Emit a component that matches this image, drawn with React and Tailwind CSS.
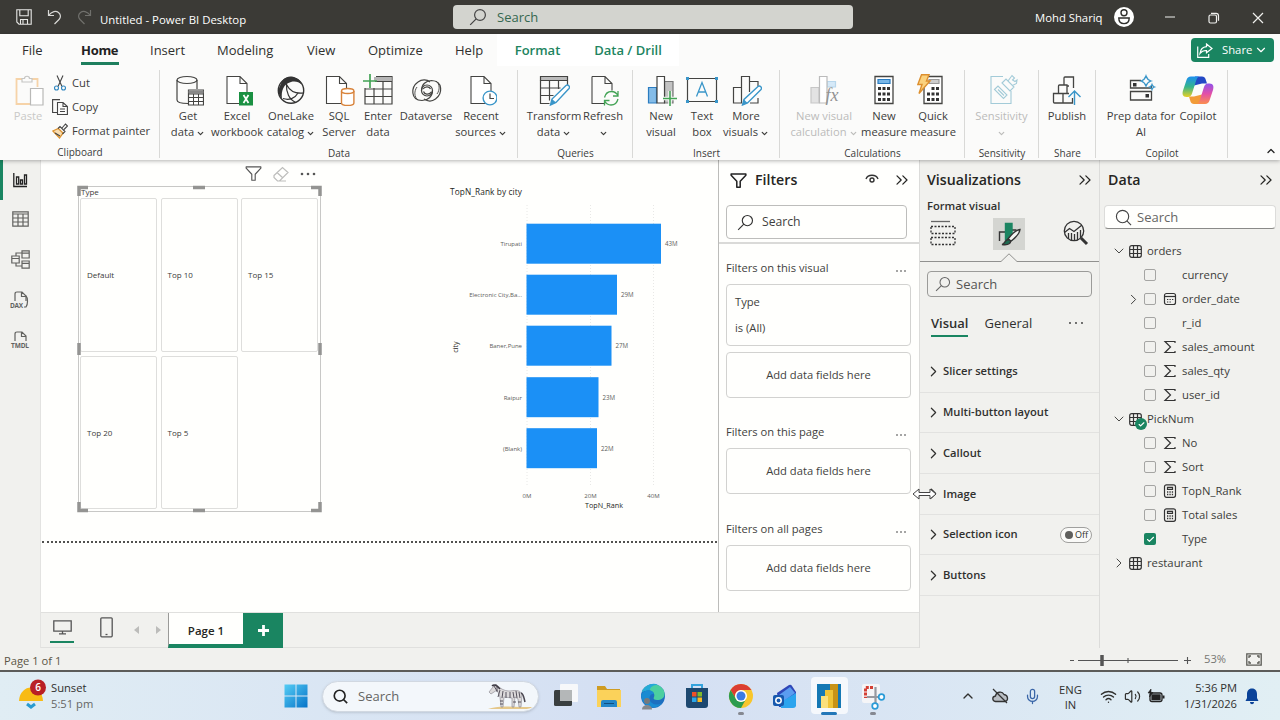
import {
  Check,
  ChevronDown,
  ChevronRight,
  ChevronUp,
  ChevronsRight,
  Mic,
  Wifi,
  Volume2,
} from "lucide-react";

const INK = "#444442";
const BLUE = "#3a96c9";

/* ---------- small shared glyphs ---------- */

function Magnifier({ size = 18, color = "#333", flip = false, width = 1.2 }) {
  return (
    <svg width={size} height={size} viewBox="0 0 18 18" fill="none" stroke={color} strokeWidth={width}>
      {flip ? (
        <>
          <circle cx="8" cy="8" r="6.5" />
          <path d="M12.6 12.6L17 17" />
        </>
      ) : (
        <>
          <circle cx="11" cy="7" r="5.4" />
          <path d="M7.2 10.8L1.2 16.8" />
        </>
      )}
    </svg>
  );
}

function Funnel({ size = 18, color = "#222", width = 1.4 }) {
  return (
    <svg width={size} height={size} viewBox="0 0 18 18" fill="none" stroke={color} strokeWidth={width} strokeLinejoin="round">
      <path d="M1.2 2h15.6v1.4l-6 6.4v6.4H7.2V9.8l-6-6.4z" />
    </svg>
  );
}

function Dots({ gap = 4, r = 0.8, color = "#333", className = "" }) {
  return (
    <svg width={gap * 2 + 4} height="4" viewBox={`0 0 ${gap * 2 + 4} 4`} fill={color} className={className}>
      <circle cx="2" cy="2" r={r} />
      <circle cx={2 + gap} cy="2" r={r} />
      <circle cx={2 + gap * 2} cy="2" r={r} />
    </svg>
  );
}

function Icon({ children }) {
  return (
    <svg width="32" height="32" viewBox="0 0 32 32" fill="none" stroke={INK} strokeWidth="1.2" className="shrink-0">
      {children}
    </svg>
  );
}

const PageShape = () => (
  <path d="M6 2.5h13l7 7v20H6zM19 2.5v7h7" fill="#fff" strokeWidth="1.1" />
);

/* ---------- ribbon icons ---------- */

const icons = {
  paste: (
    <Icon>
      <path d="M10 5H4.5v25H18M20 5h5.5v8" stroke="#f6d3a8" strokeWidth="1.8" />
      <path d="M10 8V4.5h2.5c0-3 5-3 5 0H20V8z" stroke="#c6c6c4" />
      <path d="M18.500 14.500h12.500v16.500h-12.500z" stroke="#b9b9b7" fill="#fff" />
    </Icon>
  ),
  getData: (
    <Icon>
      <ellipse cx="15" cy="6" rx="10" ry="3.5" />
      <path d="M5 6v20c0 2 4 3.500 11 3.500M25 6v9" />
      <path d="M16.500 16h15v15h-15z" fill="#fff" />
      <path d="M16.500 16.500h15v3h-15z" fill="#888" stroke="none" />
      <path d="M16.500 20h15M16.500 23.500h15M16.500 27.500h15M21.500 20v11M26.500 20v11" strokeWidth="1" />
    </Icon>
  ),
  excel: (
    <Icon>
      <PageShape />
      <path d="M18 18h14v13.500H18z" fill="#1a9042" stroke="none" />
      <path d="M22.500 21l5 8M27.500 21l-5 8" stroke="#fff" strokeWidth="1.700" />
    </Icon>
  ),
  oneLake: (
    <Icon>
      <circle cx="16" cy="16.500" r="12.700" stroke="#333" strokeWidth="1.400" />
      <path d="M21 4C13 0 7 5 6 10c-3.500 5-3 11 1 14.500C6 17 8.500 10 16 8c4-1.200 8 0 10.500 2.500C25.500 7 24 5 21 4z" fill="#333" stroke="none" />
      <path d="M11.500 10c-.5 8 2.500 16 9.500 18.500M11.500 10.500c3.500 7 9 9.500 17 8.500M8 24.500c6 2 12 0 15-5.500" stroke="#333" />
    </Icon>
  ),
  sql: (
    <Icon>
      <path d="M3.500 2.500h13l7 7v20h-20zM16.500 2.500v7h7" fill="#fff" strokeWidth="1.1" />
      <path d="M18.500 17v12c0 1.500 3 2.500 6.200 2.500s6.200-1 6.200-2.500V17" fill="#fff" stroke="#d8833b" strokeWidth="1.400" />
      <ellipse cx="24.700" cy="17" rx="6.200" ry="2.500" fill="#fff" stroke="#d8833b" strokeWidth="1.400" />
    </Icon>
  ),
  enter: (
    <Icon>
      <path d="M14 2.500h16v27.500h-27V14" />
      <path d="M12 3h17.500v4H12z" fill="#b5b5b5" stroke="none" />
      <path d="M13 7.500h17M3 15h27M3 22.500h27M12 14v16M21 7.500V30" />
      <path d="M8 0v14M1 7h14" stroke="#43a355" strokeWidth="1.700" />
    </Icon>
  ),
  dataverse: (
    <Icon>
      <g strokeWidth="1.200">
        <circle cx="17" cy="16.500" r="5.500" />
        <path d="M22.500 16.500c0 6-4.500 10-10.500 10C0 26 1 13 8 8c4-3 9-2.500 12 0" />
        <path d="M11.500 16.500c0-6 4.500-10 10-10 12 .5 11 13.500 4 18.500-4 3-8.500 2-11.500 0" />
        <path d="M8 26c-4-3-4-9-1-13M26 7c4 3 4 9 1 13" strokeWidth=".9" />
        <path d="M13.500 17.500c1 3 5 4 8 .5M20.500 15c-1.500-3-5.500-2.500-7.500 0" />
      </g>
    </Icon>
  ),
  recent: (
    <Icon>
      <PageShape />
      <circle cx="25" cy="24" r="6.900" fill="#fff" stroke={BLUE} strokeWidth="1.400" />
      <path d="M25 19.500v5h4" />
    </Icon>
  ),
  transform: (
    <Icon>
      <path d="M2.500 2.500h27v4h-27z" fill="#bbb" />
      <path d="M29.500 6.500v5M2.500 6.500v23h9M2.500 14h20M2.500 21.500h13M11.500 6.500v20M20.500 6.500V15" />
      <path d="M12.500 31l1.500-6L28 11.500c2-1.500 4.500 1 3 3L18 28.500z" fill="#fff" stroke={BLUE} strokeWidth="1.400" />
      <path d="M12.500 31l1.500-6 4 3.500z" fill={BLUE} stroke="none" />
    </Icon>
  ),
  refresh: (
    <Icon>
      <path d="M5 2.500h13l7 7v7M5 2.500v27h12M18 2.500v7h7" strokeWidth="1.1" />
      <path d="M17.500 23.500c1-4 3-6 7-6 3 0 5 1.500 6.500 4M31 17v5h-5M31 25c-1 4-3.500 6-7 6-3 0-5-1.500-6.500-4M17.500 31.500v-5h5" stroke="#43a355" strokeWidth="1.300" />
    </Icon>
  ),
  newVisual: (
    <Icon>
      <path d="M3.500 13.500h8V29h-8z" fill="#84bce8" stroke="#2b7cc0" />
      <path d="M19.500 7.500H28V29h-8.500z" fill="#c3c3c3" stroke="#777" />
      <path d="M12 2.500h7.500V29H12z" fill="#fff" />
      <path d="M25 17v15M18 24.500h14" stroke="#fbfbfa" strokeWidth="3.500" />
      <path d="M25 17v15M18 24.500h14" stroke="#43a355" strokeWidth="1.600" />
    </Icon>
  ),
  textBox: (
    <Icon>
      <path d="M1.500 4.500h29v23h-29z" />
      <path d="M10.500 22.500l5.500-14 5.500 14M12.500 18h7" stroke={BLUE} strokeWidth="1.300" />
      <path d="M0 3h3v3H0zM29 3h3v3h-3zM0 26h3v3H0zM29 26h3v3h-3z" fill={BLUE} stroke="none" />
    </Icon>
  ),
  moreVisuals: (
    <Icon>
      <path d="M3.500 13.500h8V29h-8zM11.500 29V2.500h8V18M19.500 7.500H28v5M28 24v5h-8" />
      <path d="M12.500 31l1.500-5.500L28 12.500c2-1.500 4.500 1 3 3L17.500 29z" fill="#fff" stroke={BLUE} strokeWidth="1.400" />
      <path d="M12.500 31l1.500-5.500 3.500 3.500z" fill={BLUE} stroke="none" />
    </Icon>
  ),
  calcVisual: (
    <Icon>
      <path d="M3 13.500h8V29H3z" fill="#e3e3e3" stroke="#c7c7c7" />
      <path d="M19 7.500h8.500V13H19z" fill="#d5e9f8" stroke="#b8d7ec" />
      <path d="M11.500 2.500H19V29h-7.500z" fill="#fff" stroke="#bbb" />
      <text x="17.500" y="27" fontSize="18" fontStyle="italic" fontFamily="Liberation Serif, serif" fill="#929292" stroke="none">
        fx
      </text>
    </Icon>
  ),
  measure: (
    <Icon>
      <path d="M7 2.500h18v27H7z" fill="#fff" strokeWidth="1.300" />
      <path d="M10 5.500h12v4H10z" fill="#79b7e8" stroke="#2b7cc0" />
      <path
        d="M10 13h3v3h-3zM14.500 13h3v3h-3zM19 13h3v3h-3zM10 18.500h3v3h-3zM14.500 18.500h3v3h-3zM19 18.500h3v3h-3zM10 24h3v3h-3zM14.500 24h3v3h-3zM19 24h3v3h-3z"
        fill="#333"
        stroke="none"
      />
    </Icon>
  ),
  quick: (
    <Icon>
      <path d="M7 2.500h18v27H7z" fill="#fff" strokeWidth="1.300" />
      <path d="M12 5.500h10v4H12z" fill="#ccc" stroke="#999" />
      <path
        d="M14.500 13h3v3h-3zM19 13h3v3h-3zM10 18.500h3v3h-3zM14.500 18.500h3v3h-3zM19 18.500h3v3h-3zM10 24h3v3h-3zM14.500 24h3v3h-3zM19 24h3v3h-3z"
        fill="#333"
        stroke="none"
      />
      <path d="M4.500.7H12L9.500 7H13L2 19.500l3-9H.8z" fill="#fbd27e" stroke="#dd8f2e" strokeWidth="1.400" />
    </Icon>
  ),
  sensitivity: (
    <Icon>
      <g stroke="#a3cbd8" strokeWidth="1.100">
        <path d="M17 2.500H5V29.500h20V17" />
        <path d="M8.500 15.500l3.500-3.500 9 9-3.500 3.500zM12 15.500l6 6" />
        <path d="M16 9l4-4 8 8-4 4zM22 7l4-5.500 2.500 2.500-2 2 2.500 1.500 2-1.500-.5 3.500-4 2" />
      </g>
    </Icon>
  ),
  publish: (
    <Icon>
      <path d="M2.500 19.500h9.500v9.500H3.500q-1 0-1-1zM7.500 19.500V12q0-1 1-1h7.500v8.500M12 29h9.500V24M13 11V4q0-1 1-1h8.500v11M12 19.500h6M16 12h2" strokeWidth="1.300" />
      <path d="M23.500 31V17.500M17.500 23l6-6 6 6" stroke={BLUE} strokeWidth="1.400" />
    </Icon>
  ),
  prep: (
    <Icon>
      <path d="M16 6.500H5.500v7.500h21v-2M5.500 17.500h21V26h-21z" strokeWidth="1.300" />
      <path d="M8 9h3.500v3.500H8zM20.500 20H24v3.500h-3.500z" fill="#333" stroke="none" />
      <path d="M21 2c1 3 2 4 5 5-3 1-4 2-5 5-1-3-2-4-5-5 3-1 4-2 5-5z" stroke={BLUE} strokeWidth="1.300" />
      <path d="M27 10.500c.5 1.500 1 2 2.500 2.500-1.500.5-2 1-2.500 2.500-.5-1.500-1-2-2.500-2.500 1.500-.5 2-1 2.500-2.500z" stroke={BLUE} />
    </Icon>
  ),
  copilot: (
    <Icon>
      <defs>
        <linearGradient id="cpLeft" x1="0" y1="0" x2="0" y2="1">
          <stop offset="0" stopColor="#1c8ff0" />
          <stop offset="0.5" stopColor="#35b58b" />
          <stop offset="1" stopColor="#e8d024" />
        </linearGradient>
        <linearGradient id="cpRight" x1="0" y1="0" x2="0" y2="1">
          <stop offset="0" stopColor="#8f52ea" />
          <stop offset="0.5" stopColor="#e34fa8" />
          <stop offset="1" stopColor="#fb8e4e" />
        </linearGradient>
      </defs>
      <g stroke="none">
        <path d="M13 2.500h7c2 0 3 1 3.500 2.500L25 9.500h-5l-8 2z" fill="#2348c5" />
        <path d="M19 30h-7c-2 0-3-1-3.500-2.500L7 22.500h5l8-2z" fill="#f29b38" />
        <path d="M9 2.500h8c-2 1-2.500 3-3.500 6l-3.500 11c-.7 2-2 3.500-4 3.500H4.500c-4 0-4.500-3-3.500-6.500L4.500 6C5.200 4 6.500 2.500 9 2.500z" fill="url(#cpLeft)" />
        <path d="M23 30h-8c2-1 2.500-3 3.500-6L22 13c.7-2 2-3.500 4-3.500h1.500c4 0 4.500 3 3.500 6.500l-3.500 10.500c-.7 2-2 3.500-4.500 3.500z" fill="url(#cpRight)" />
      </g>
    </Icon>
  ),
};

const groups = [
  {
    name: "Data",
    box: "w-[358px]",
    pad: "pl-1",
    items: [
      { icon: "getData", a: "Get", b: "data", caret: true, w: "w-12" },
      { icon: "excel", a: "Excel", b: "workbook", w: "w-[50px]" },
      { icon: "oneLake", a: "OneLake", b: "catalog", caret: true, w: "w-[58px]" },
      { icon: "sql", a: "SQL", b: "Server", w: "w-[38px]" },
      { icon: "enter", a: "Enter", b: "data", w: "w-10" },
      { icon: "dataverse", a: "Dataverse", w: "w-14" },
      { icon: "recent", a: "Recent", b: "sources", caret: true, w: "w-[54px]" },
    ],
  },
  {
    name: "Queries",
    box: "w-[115px]",
    pad: "pl-[10px]",
    items: [
      { icon: "transform", a: "Transform", b: "data", caret: true, w: "w-[52px]" },
      { icon: "refresh", a: "Refresh", b: "", caret: true, w: "w-[46px]" },
    ],
  },
  {
    name: "Insert",
    box: "w-[147px]",
    pad: "pl-2",
    items: [
      { icon: "newVisual", a: "New", b: "visual", w: "w-10" },
      { icon: "textBox", a: "Text", b: "box", w: "w-[42px]" },
      { icon: "moreVisuals", a: "More", b: "visuals", caret: true, w: "w-[46px]" },
    ],
  },
  {
    name: "Calculations",
    box: "w-[185px]",
    pad: "pl-2",
    items: [
      { icon: "calcVisual", a: "New visual", b: "calculation", caret: true, dim: true, w: "w-[72px]" },
      { icon: "measure", a: "New", b: "measure", w: "w-12" },
      { icon: "quick", a: "Quick", b: "measure", w: "w-[50px]" },
    ],
  },
  {
    name: "Sensitivity",
    box: "w-[74px]",
    pad: "",
    items: [{ icon: "sensitivity", a: "Sensitivity", b: "", caret: true, dim: true, w: "w-[73px]" }],
  },
  {
    name: "Share",
    box: "w-[57px]",
    pad: "",
    items: [{ icon: "publish", a: "Publish", w: "w-14" }],
  },
  {
    name: "Copilot",
    box: "w-[132px]",
    pad: "pl-[10px]",
    items: [
      { icon: "prep", a: "Prep data for", b: "AI", w: "w-[70px]" },
      { icon: "copilot", a: "Copilot", w: "w-11" },
    ],
  },
];

function RibbonButton({ item }) {
  return (
    <div className={`flex shrink-0 flex-col items-center ${item.w} ${item.dim ? "text-[#bcbcba]" : "text-[#3c3c3a]"}`}>
      {icons[item.icon]}
      <span className="mt-[2px] whitespace-nowrap leading-4">{item.a}</span>
      <span className="flex h-4 items-center gap-[2px] whitespace-nowrap leading-4">
        {item.b}
        {item.caret ? <ChevronDown size={9} strokeWidth={3.2} className="mt-[2px]" /> : null}
      </span>
    </div>
  );
}

function TitleBar() {
  return (
    <header className="flex h-[34px] items-center bg-[#3b3a36] text-white">
      <div className="flex w-[446px] items-center pl-4">
        <svg width="16" height="16" viewBox="0 0 16 16" fill="none" stroke="#e8e8e6" strokeWidth="1.1">
          <path d="M.8.8h14.400v14.400H3L.8 13zM3.800.8v6h8.400v-6M4.500 15v-4.500h7V15M7 11v4" />
        </svg>
        <svg width="15" height="16" viewBox="0 0 15 16" fill="none" stroke="#d8d8d6" strokeWidth="1.200" className="ml-[15px]">
          <path d="M1.500 1v5.500H7M1.500 6.500C5 2 9 1.500 11.500 3.500c2.500 2 2.500 5 .5 7L7.500 15" />
        </svg>
        <svg width="15" height="16" viewBox="0 0 15 16" fill="none" stroke="#70706c" strokeWidth="1.200" className="ml-[15px]">
          <path d="M13.500 1v5.500H8M13.500 6.500C10 2 6 1.500 3.500 3.500 1 5.500 1 8.500 3 10.500L7.500 15" />
        </svg>
        <span className="ml-[8px] mt-[5px] whitespace-nowrap text-[11.400px]">Untitled - Power BI Desktop</span>
      </div>
      <div className="ml-[7px] flex h-6 w-[400px] items-center rounded-sm bg-[#d3d4cf] pl-4 text-[#35684f]">
        <Magnifier color="#444" size={18} />
        <span className="ml-[10px] mt-[2px] text-[13px]">Search</span>
      </div>
      <span className="ml-[182px] mt-[2px] whitespace-nowrap text-[11.300px]">Mohd Shariq</span>
      <svg width="20" height="20" viewBox="0 0 20 20" fill="none" stroke="#2f2f2c" strokeWidth="1.400" className="ml-[11px]">
        <circle cx="10" cy="10" r="10" fill="#fff" stroke="none" />
        <circle cx="10" cy="5.800" r="3" />
        <path d="M4.800 11h10.400c0 3.600-2.200 5.600-5.200 5.600S4.800 14.600 4.800 11z" />
      </svg>
      <svg width="100" height="14" viewBox="0 0 100 14" fill="none" stroke="#f0f0ee" strokeWidth="1.200" className="ml-[31px] mt-[2px]">
        <path d="M0 6h10M88 2l10 10M98 2L88 12" />
        <rect x="44" y="4" width="7.500" height="8" rx="1.500" />
        <path d="M46 2.300h5c1.500 0 2.500 1 2.500 2.500v5" />
      </svg>
    </header>
  );
}

function Menu() {
  return (
    <nav className="flex h-8 items-stretch text-[13px] text-[#30302e]">
      <div className="flex w-[497px] items-center pt-[2px]">
        <span className="w-[81px] pl-[22px]">File</span>
        <span className="relative w-[69px] font-bold tracking-[-0.3px] text-[#222]">
          Home
          <i className="absolute -bottom-[4px] left-0 h-[3px] w-[38px] bg-[#1e7f5e]" />
        </span>
        <span className="w-[67px]">Insert</span>
        <span className="w-[90px]">Modeling</span>
        <span className="w-[61px]">View</span>
        <span className="w-[87px]">Optimize</span>
        <span>Help</span>
      </div>
      <span className="flex w-[80px] items-center justify-center bg-white pt-[2px] pl-px font-semibold text-[#218460]">Format</span>
      <span className="flex w-[102px] items-center justify-center bg-white pt-[2px] font-semibold text-[#218460]">Data / Drill</span>
      <button className="mt-1 ml-auto mr-[6px] flex h-6 w-[83px] items-center rounded bg-[#1a8561] pl-[6px] text-white">
        <svg width="16" height="15" viewBox="0 0 16 15" fill="none" stroke="#fff" strokeWidth="1.200">
          <path d="M.7 3.500v10.800h11V11M9.500 1l5.500 4.500-5.500 4.200V7.500C6.500 7.300 4.500 8.500 3 10.500c.5-4 3-6.500 6.500-6.800z" />
        </svg>
        <span className="ml-[9px] mt-px text-[11.300px]">Share</span>
        <ChevronDown size={14} className="ml-[2px]" />
      </button>
    </nav>
  );
}

function Clipboard() {
  return (
    <div className="flex h-[94px] w-[160px] flex-col">
      <div className="flex h-[79px]">
        <div className="ml-[13px] flex w-[30px] flex-col items-center pt-2 text-[#c9c9c7]">
          {icons.paste}
          <span className="mt-[2px] leading-4">Paste</span>
        </div>
        <div className="ml-[9px] flex flex-col pt-[5px] text-[#3c3c3a]">
          <div className="flex h-6 items-center gap-[4px]">
            <svg width="16" height="16" viewBox="0 0 16 16" fill="none" stroke="#444" strokeWidth="1.100">
              <path d="M5 .5l5 11M11 .5l-5 11" />
              <circle cx="4.500" cy="13" r="2" stroke="#2f86c0" />
              <circle cx="11.500" cy="13" r="2" stroke="#2f86c0" />
            </svg>
            Cut
          </div>
          <div className="flex h-6 items-center gap-[4px]">
            <svg width="16" height="16" viewBox="0 0 16 16" fill="none" stroke="#444" strokeWidth="1.100">
              <path d="M5 13.500H.6V.6H8M5.500 3.500h5.500l4.400 4v8h-9.900zM11 3.500v4h4.400M8 10h5M8 12.500h5" />
            </svg>
            Copy
          </div>
          <div className="flex h-6 items-center gap-[4px] whitespace-nowrap">
            <svg width="16" height="16" viewBox="0 0 16 16" fill="none" stroke="#444" strokeWidth="1.100">
              <path d="M.8 8l5.500-2.500L11 10l-3.500 5z" fill="#f8dcb0" stroke="#dc922f" strokeWidth="1.300" />
              <path d="M3 10l5 3M6 5.500l2-2 5 5-2.500 2.500M10 5L13.500 1l2 2L12 6.500" />
            </svg>
            Format painter
          </div>
        </div>
      </div>
      <span className="text-center text-[10px] leading-4">Clipboard</span>
    </div>
  );
}

function Divider() {
  return <i className="-ml-px mt-1 h-[88px] w-px shrink-0 bg-[#d9d9d7]" />;
}

function Ribbon() {
  return (
    <section className="relative z-10 h-[126px] bg-[#fbfbfa] shadow-[0_1px_4px_rgba(0,0,0,0.3)]">
      <Menu />
      <div className="flex text-[11.200px] text-[#3c3c3a]">
        <Clipboard />
        <Divider />
        {groups.map((group) => (
          <div key={group.name} className={`flex shrink-0 ${group.box}`}>
            <div className="flex w-full shrink-0 flex-col">
              <div className={`flex h-[79px] shrink-0 pt-2 ${group.pad}`}>
                {group.items.map((item, i) => (
                  <RibbonButton key={i} item={item} />
                ))}
              </div>
              <span className="text-center text-[10px] leading-4">{group.name}</span>
            </div>
            <Divider />
          </div>
        ))}
        <ChevronUp size={12} strokeWidth={2.6} className="mt-[79px] ml-auto mr-[3px] text-[#222]" />
      </div>
    </section>
  );
}

/* ---------- left rail ---------- */

function ViewRail() {
  return (
    <aside className="flex w-[41px] flex-col border-r border-[#e3e3e1] bg-[#f1f1ee] text-[#62625f]">
      <div className="flex h-10 items-center border-l-[3px] border-[#1a8561] pl-[10px]">
        <svg width="15" height="16" viewBox="0 0 15 16" fill="none" stroke="#222" strokeWidth="1.300">
          <path d="M.8 1v13.500H14M3.500 5h2.200v7H3.500zM7.500 8h2v4h-2zM11.500 3h2v9h-2z" />
        </svg>
      </div>
      <div className="flex h-10 items-center pb-[2px] pl-3">
        <svg width="17" height="16" viewBox="0 0 17 16" fill="none" stroke="#62625f" strokeWidth="1.200">
          <path d="M.8.8h15.400v14.400H.8zM.8 3h15.400M.8 7h15.400M.8 11h15.400M6 3v12M11 3v12" />
        </svg>
      </div>
      <div className="flex h-10 items-center pb-[2px] pl-[11px]">
        <svg width="19" height="19" viewBox="0 0 19 19" fill="none" stroke="#62625f" strokeWidth="1.200">
          <path d="M.8 6h7.400v7H.8zM.8 8.500h7.400M11 .8h7.200V8H11zM11 3.200h7.200M11 11h7.200v7.200H11zM11 13.400h7.200M5 6V3h6M5 13v3h6" />
        </svg>
      </div>
      {["DAX", "TMDL"].map((label) => (
        <div key={label} className="flex h-10 items-center pl-[10px]">
          <svg width="22" height="20" viewBox="0 0 22 20" fill="none" stroke="#62625f" strokeWidth="1.200">
            <path d="M5 11V4q0-2 2-2h5l4 4v5M11.500 2.500V6.500h4" />
            {label === "DAX" ? <path d="M16 6c2 2 2 8 0 11h-2" /> : null}
            <text x={label === "DAX" ? 0 : 1} y="17.500" textLength={label === "DAX" ? 13 : 18} fontSize="6.500" fontWeight="700" fill="#62625f" stroke="none">
              {label}
            </text>
          </svg>
        </div>
      ))}
    </aside>
  );
}

/* ---------- report canvas ---------- */

const cities = [
  { name: "Tirupati", label: "43M", y: 64, w: 134.5 },
  { name: "Electronic City,Ba...", label: "29M", y: 115, w: 90.5 },
  { name: "Baner,Pune", label: "27M", y: 166, w: 85 },
  { name: "Raipur", label: "23M", y: 217.5, w: 72 },
  { name: "(Blank)", label: "22M", y: 268.5, w: 70.5 },
];

function Slicer() {
  return (
    <div className="absolute left-[37px] top-[26px] h-[326px] w-[243px] border border-[#c8c8c6] pl-[2px] text-[8px] text-[#3b3b39]">
      <p className="h-[11px] leading-[10px]">Type</p>
      <div className="-ml-px grid grid-cols-[77px_77px_77px] grid-rows-[154px_153px] gap-x-[3.5px] gap-y-[4px]">
        {["Default", "Top 10", "Top 15", "Top 20", "Top 5"].map((label) => (
          <div key={label} className="flex items-center rounded-[2px] border border-[#dededc] pl-[6px]">
            {label}
          </div>
        ))}
      </div>
      <svg width="245" height="328" viewBox="0 0 245 328" className="absolute -left-[2px] -top-[2px]" fill="none" stroke="#949492" strokeWidth="3.500">
        <path d="M2 11V2.500h9M234 2.500h9V11M2 317v8.500h9M234 325.500h9V317M116 2.500h12M116 325.500h12M2 158v12M243 158v12" />
      </svg>
      <div className="absolute -top-[22px] left-[166px] flex items-center gap-[11px]">
        <Funnel size={17} color="#555" width={1.2} />
        <svg width="16" height="16" viewBox="0 0 16 16" fill="none" stroke="#bdbdbb" strokeWidth="1.200">
          <path d="M1 9.500L9.500 1.500l5.500 5L6.500 15H4.500L1 11.500zM4 6.500l6 5.500M5 15h8" />
        </svg>
        <Dots gap={6} r={1.3} color="#555" />
      </div>
    </div>
  );
}

function RankChart() {
  return (
    <svg width="260" height="340" viewBox="400 20 260 340" className="absolute left-[400px] top-5" fontSize="6" fill="#5c5c5a">
      <text x="409" y="34.500" fontSize="8.300" fontWeight="500" fill="#252523" textLength="72">
        TopN_Rank by city
      </text>
      {[486, 549.5, 612.5].map((x) => (
        <path key={x} d={`M${x} 45V325`} stroke="#e8e8e6" strokeDasharray="1 2" />
      ))}
      {cities.map((city) => (
        <g key={city.name}>
          <text x="481" y={city.y + 22} textAnchor="end">
            {city.name}
          </text>
          <rect x="485.5" y={city.y - 0.3} width={city.w} height="40" fill="#1b90f6" />
          <text x={486 + city.w + 3.5} y={city.y + 22} fontSize="6.2">
            {city.label}
          </text>
        </g>
      ))}
      <text x="486" y="338" textAnchor="middle">0M</text>
      <text x="549.500" y="338" textAnchor="middle">20M</text>
      <text x="612.500" y="338" textAnchor="middle">40M</text>
      <text x="563" y="348" textAnchor="middle" fontSize="7.200" fill="#252523">TopN_Rank</text>
      <text transform="translate(416.500 187) rotate(-90)" textAnchor="middle" fontSize="7.200" fill="#252523">city</text>
    </svg>
  );
}

/* ---------- filters ---------- */

function FilterSection({ title, box, children }) {
  return (
    <div className={`pl-[7px] pr-[8px] ${box}`}>
      <div className="flex h-5 items-center justify-between pr-1">
        <span className="whitespace-nowrap">{title}</span>
        <Dots gap={4} r={0.8} className="mt-[6px]" />
      </div>
      {children}
      <div className="mt-[6px] flex h-[46px] items-center justify-center rounded-sm border border-[#d2d2d0]">
        Add data fields here
      </div>
    </div>
  );
}

function FiltersPane() {
  return (
    <aside className="h-[452px] w-[201px] border-l border-[#bcbcba] bg-[#fffffd] text-[11.200px] text-[#3f3f3d]">
      <div className="flex h-[84px] flex-col border-b-2 border-[#dadad8] px-[7px]">
        <div className="flex h-10 items-center pl-1 text-[#252523]">
          <Funnel size={17} color="#222" width={1.6} />
          <span className="ml-2 text-[14.200px] font-semibold">Filters</span>
          <svg width="14" height="10" viewBox="0 0 14 10" fill="none" stroke="#333" strokeWidth="1.400" className="ml-auto mb-[2px] mr-[13px]">
            <path d="M1 5c2-5 10-5 12 0" />
            <circle cx="7" cy="6" r="2" />
          </svg>
          <ChevronsRight size={20} strokeWidth={1.5} />
        </div>
        <div className="mt-[5px] flex h-[34px] w-[181px] items-center rounded-sm border border-[#bdbdbb] pl-[10px] text-[12.200px]">
          <Magnifier size={17} color="#333" />
          <span className="ml-2 mt-px">Search</span>
        </div>
      </div>
      <FilterSection title="Filters on this visual" box="pt-[14px]">
        <div className="mt-[6px] flex h-[62px] flex-col justify-center gap-[10px] rounded-sm border border-[#d2d2d0] pl-2 leading-4">
          <span>Type</span>
          <span>is (All)</span>
        </div>
      </FilterSection>
      <FilterSection title="Filters on this page" box="pt-[24px]" />
      <FilterSection title="Filters on all pages" box="pt-[25px]" />
    </aside>
  );
}

/* ---------- visualizations ---------- */

const formatCards = ["Slicer settings", "Multi-button layout", "Callout", "Image", "Selection icon", "Buttons"];

function VisualizationsPane() {
  return (
    <aside className="w-[181px] border-x border-[#dcdcda] bg-[#f1f1ee] text-[#30302e]">
      <div className="flex h-10 items-center justify-between pl-[7px] pr-1 text-[#252523]">
        <span className="text-[14.200px] font-semibold">Visualizations</span>
        <ChevronsRight size={20} strokeWidth={1.5} />
      </div>
      <p className="h-[18px] pl-[7px] text-[11.200px] font-semibold leading-[12px]">Format visual</p>
      <div className="relative flex h-[44px] border-b border-[#91918f]">
        <svg width="26" height="26" viewBox="0 0 26 26" fill="none" stroke="#333" strokeWidth="1.300" className="ml-[10px] mt-[2px]">
          <path d="M1 1.500h19" stroke="#666" />
          <path d="M1 6.500h24v7H1zM1 17.500h24v7H1z" strokeDasharray="2 1.500" />
        </svg>
        <div className="ml-[37px] flex h-8 w-8 items-center justify-center bg-[#d4d5d1]">
          <svg width="24" height="24" viewBox="0 0 24 24" fill="none" stroke="#333" strokeWidth="1.400">
            <path d="M2.500 19V10h6M15 8h4.500" />
            <path d="M8.500 1.500h6.500V18H8.500z" fill="#1c8562" stroke="#1c8562" />
            <path d="M11 17c3-4 8-9 12-9.500-.5 4-5.500 9-9.500 12z" fill="#f4f4f2" />
            <path d="M5 22.500c3-.5 2.500-4.500 6-5 2.500 0 3.500 2 1.500 4-2 1.500-5 1.500-7.500 1z" fill="#1c6b50" />
          </svg>
        </div>
        <svg width="26" height="26" viewBox="0 0 26 26" fill="none" stroke="#333" strokeWidth="1.300" className="ml-[38px] mt-[2px]">
          <circle cx="11" cy="11" r="9.700" />
          <path d="M1.500 12.500l5-4 4.500 3 8-6.500" />
          <path d="M5.500 13v6M8.500 13v7M11.500 14v6M14.500 12v8M17.500 10v8" />
          <path d="M18 18l6 6" strokeWidth="3" />
        </svg>
        <svg width="18" height="9" viewBox="0 0 18 9" className="absolute -bottom-px left-[80px]">
          <path d="M0 9h18L9 0z" fill="#f1f1ee" />
          <path d="M0 8.500h1L9 .8l8 7.700h1" fill="none" stroke="#91918f" />
        </svg>
      </div>
      <div className="ml-[7px] mt-[9px] flex h-[26px] w-[165px] items-center rounded-sm border border-[#9b9b99] pl-[7px] text-[13px] text-[#555553]">
        <Magnifier size={16} color="#666" />
        <span className="ml-[5px] mt-[2px]">Search</span>
      </div>
      <div className="mt-[14px] flex h-[41px] items-start pl-[11px] text-[13px]">
        <span className="h-[26px] border-b-2 border-[#1a8561] pt-[3px] font-semibold">Visual</span>
        <span className="ml-4 pt-[3px]">General</span>
        <Dots gap={6} r={0.9} className="ml-auto mr-[15px] mt-[10px]" />
      </div>
      {formatCards.map((name) => (
        <div key={name} className="flex h-[40.700px] items-center border-b border-[#e2e2e0] pl-[6px] text-[11.200px] font-semibold">
          <ChevronRight size={17} strokeWidth={1.7} className="-ml-[1px] mr-px" />
          {name}
          {name === "Selection icon" ? (
            <span className="ml-auto mr-[7px] flex h-4 w-8 items-center gap-[2px] rounded-full border border-[#a0a09e] bg-[#fafaf8] pl-1 text-[9px] font-normal">
              <i className="h-[8px] w-[8px] rounded-full bg-[#5f5f5d]" />
              Off
            </span>
          ) : null}
        </div>
      ))}
    </aside>
  );
}

/* ---------- data ---------- */

const fields = [
  { table: "orders", open: true },
  { name: "currency" },
  { name: "order_date", kind: "date" },
  { name: "r_id" },
  { name: "sales_amount", kind: "sum" },
  { name: "sales_qty", kind: "sum" },
  { name: "user_id", kind: "sum" },
  { table: "PickNum", open: true, used: true },
  { name: "No", kind: "sum" },
  { name: "Sort", kind: "sum" },
  { name: "TopN_Rank", kind: "calc" },
  { name: "Total sales", kind: "calc" },
  { name: "Type", checked: true },
  { table: "restaurant" },
];

function FieldIcon({ kind }) {
  return (
    <svg width="14" height="14" viewBox="0 0 14 14" fill="none" stroke="#333" strokeWidth="1.200">
      {kind === "sum" ? <path d="M12 3V1.500H2L7.500 7 2 12.500h10V11" /> : null}
      {kind === "date" ? (
        <>
          <rect x="1.500" y="1.500" width="11" height="11" rx="2" />
          <path d="M1.500 4.500h11" />
          <path d="M4 7.500h6.500M4 10h4.500" strokeDasharray="1.300 1.200" />
        </>
      ) : null}
      {kind === "calc" ? (
        <>
          <rect x="1.500" y=".8" width="11" height="12.500" rx="2" />
          <path d="M4.500 3.300h5v2h-5z" />
          <path d="M4 8h6.500M4 10.500h6.500" strokeDasharray="1.300 1.100" strokeWidth="1.400" />
        </>
      ) : null}
    </svg>
  );
}

function DataPane() {
  return (
    <aside className="min-w-0 flex-1 bg-[#f1f1ee] text-[#3c3c3a]">
      <div className="flex h-10 items-center justify-between pl-2 pr-1 text-[#252523]">
        <span className="text-[14.200px] font-semibold">Data</span>
        <ChevronsRight size={20} strokeWidth={1.5} />
      </div>
      <div className="ml-1 mt-[5px] flex h-6 w-[172px] items-center rounded border border-[#dcdcda] border-b-[#8a8a88] bg-[#fffffd] pl-[10px] text-[13px] text-[#666664]">
        <Magnifier size={17} color="#444" flip />
        <span className="ml-[5px] mt-[2px]">Search</span>
      </div>
      <div className="mt-[10px] text-[11.300px]">
        {fields.map((field) =>
          field.table ? (
            <div key={field.table} className="relative flex h-6 items-center pl-[11px]">
              {field.open ? <ChevronDown size={16} strokeWidth={1.4} /> : <ChevronRight size={16} strokeWidth={1.4} />}
              <svg width="13" height="13" viewBox="0 0 13 13" fill="none" stroke="#333" strokeWidth="1.200" className="ml-[2px] mr-[5px]">
                <rect x=".7" y=".7" width="11.600" height="11.600" rx="2" />
                <path d="M4.500.7v11.600M8.500.7v11.600M.7 4.500h11.600M.7 8.500h11.600" />
              </svg>
              <span className="mt-px">{field.table}</span>
              {field.used ? (
                <span className="absolute left-[35px] top-[11px] flex h-3 w-3 items-center justify-center rounded-full bg-[#1a8561] text-white">
                  <Check size={7} strokeWidth={4} />
                </span>
              ) : null}
            </div>
          ) : (
            <div key={field.name} className="flex h-6 items-center">
              <span className="flex w-11 justify-end pr-[2px]">
                {field.kind === "date" ? <ChevronRight size={17} strokeWidth={1.4} /> : null}
              </span>
              {field.checked ? (
                <span className="flex h-3 w-3 items-center justify-center rounded-[2px] bg-[#1a8561] text-white">
                  <Check size={9} strokeWidth={3} />
                </span>
              ) : (
                <span className="h-3 w-3 rounded-[2px] border border-[#a5a5a3]" />
              )}
              <span className="ml-[7px] mr-[5px] w-[14px]">
                <FieldIcon kind={field.kind} />
              </span>
              <span className="mt-px">{field.name}</span>
            </div>
          ),
        )}
      </div>
    </aside>
  );
}

/* ---------- bottom bars ---------- */

function PageTabs() {
  return (
    <div className="flex h-9 border-b border-t border-[#e0e0de] bg-[#f1f1ee]">
      <div className="ml-[9px] flex w-6 flex-col items-center pt-[7px]">
        <svg width="19" height="15" viewBox="0 0 19 15" fill="none" stroke="#555" strokeWidth="1.300">
          <path d="M.8.8h17.400v10.400H.8zM6 13.800h7M9.500 11v3" />
        </svg>
        <i className="mt-[6px] h-[2px] w-6 bg-[#1a8561]" />
      </div>
      <svg width="13" height="21" viewBox="0 0 13 21" fill="none" stroke="#555" strokeWidth="1.300" className="ml-[26px] mt-1">
        <rect x=".8" y=".8" width="11.400" height="19" rx="1" />
        <path d="M5.500 17.500h2" />
      </svg>
      <svg width="28" height="10" viewBox="0 0 28 10" fill="#bcbcba" className="ml-5 mt-3">
        <path d="M6 1v8L1 5zM23 1v8l5-4z" />
      </svg>
      <div className="ml-[7px] flex h-[35px] w-[75px] items-center justify-center border-b-4 border-l border-[#1a8561] border-l-[#9a9a98] bg-[#fffffd] pt-[5px] text-[11.500px] font-semibold text-[#252523]">
        Page 1
      </div>
      <div className="flex h-[35px] w-10 items-center justify-center bg-[#1a8561]">
        <svg width="11" height="11" viewBox="0 0 11 11" stroke="#fff" strokeWidth="2.800">
          <path d="M5.500 0v11M0 5.500h11" />
        </svg>
      </div>
    </div>
  );
}

function StatusBar() {
  return (
    <div className="flex h-6 items-center border-b-2 border-[#5c5c5a] bg-[#f1f1ee] pl-1 text-[11.200px] text-[#5b5545]">
      <span className="pt-1">Page 1 of 1</span>
      <svg width="126" height="12" viewBox="0 0 126 12" fill="none" stroke="#555" strokeWidth="1.100" className="ml-auto mr-[12px] mt-px">
        <path d="M4 6.500h4M12 6.500h100M62 4v5M118 6.500h7M121.500 3v7" />
        <path d="M36 1v11" strokeWidth="3.500" />
      </svg>
      <span className="w-[42px] pt-px text-[#777773]">53%</span>
      <svg width="16" height="13" viewBox="0 0 16 13" fill="none" stroke="#5b5b55" strokeWidth="1.300" className="mr-[18px] mt-px">
        <path d="M.8.800h14.400v11.400H.8z" />
        <path d="M3 5V3h2M11 3h2v2M13 8v2h-2M5 10H3V8" />
      </svg>
    </div>
  );
}

function Zebra() {
  return (
    <svg width="48" height="28" viewBox="0 0 48 28" fill="none">
      <path d="M2 27q8-3 20-2.500T46 25q-2 2-8 2z" fill="#e5c88b" />
      <path d="M3 10l4-5 3-3 2 2c4 4 8 5 12 5 6-1 11-1 12 4l-1 12h-2l-1-8-3-2-1 10h-2v-9l-8-1-1 10h-2l-1-10-3-7-6 4z" fill="#dcdadb" stroke="#85828a" strokeWidth=".6" />
      <path d="M8 4l3 5M11 5l0 5M14 8l-2 7M17 9l-1 7M20 10v6M24 10v6M27 10l1 6M30 9l1 7M33 10l1 6M14 19h3M14 22h3M32 20h3M27 20h3" stroke="#55515c" strokeWidth="1" />
      <path d="M6 4q3-3 8 3" stroke="#3c3942" strokeWidth="1.500" />
      <path d="M35 11c3 1 3 6 4 9" stroke="#4a4650" strokeWidth="1.500" />
    </svg>
  );
}

const apps = [
  {
    name: "desktops",
    art: (
      <>
        <rect x="9" y="2" width="18" height="18" rx="1" fill="#f7f8fa" />
        <rect x="3" y="8" width="18" height="16" rx="1.500" fill="#3a3f40" />
        <path d="M9 8h12v11H9z" fill="#b4b7b8" />
      </>
    ),
  },
  {
    name: "files",
    art: (
      <>
        <path d="M2 4h8l2 3h13v6H2z" fill="#cf9c22" />
        <path d="M2 8h24v17H2z" fill="#fbd25a" />
        <path d="M6 25v-5q0-2 2-2h12q2 0 2 2v5z" fill="#2386c8" />
        <path d="M9 21.500h10" stroke="#0f4e80" />
      </>
    ),
  },
  {
    name: "edge",
    art: (
      <>
        <circle cx="14" cy="14" r="12" fill="#1d6fc0" />
        <path d="M3 10C6 1 20-1 25 9c2 6-2 9-7 9-3 0-4-1-3-3 2-5-5-9-12-5z" fill="#4bcfa0" />
        <path d="M3 10C6 3 14 0 19 3c-5 0-8 2-8 5-3 0-6 1-8 2z" fill="#25a9d8" />
        <path d="M2 13c3-6 12-6 13-1-5-1-6 6-2 9 3 2 7 2 10 0-5 7-19 7-21-8z" fill="#1a8bd2" />
        <circle cx="8" cy="19" r="3" fill="#77797c" />
        <path d="M3 27.500c0-6 10-6 10 0z" fill="#86888b" />
      </>
    ),
  },
  {
    name: "store",
    art: (
      <>
        <path d="M9 6V3h10v3" fill="none" stroke="#35a3dc" strokeWidth="2" />
        <path d="M3 6h22v17q0 3-3 3H6q-3 0-3-3z" fill="#1d4870" />
        <path d="M9 10h4.500v4.500H9z" fill="#f05028" />
        <path d="M14.500 10H19v4.500h-4.500z" fill="#80bb2b" />
        <path d="M9 15.500h4.500V20H9z" fill="#2aa7ea" />
        <path d="M14.500 15.500H19V20h-4.500z" fill="#fcbb22" />
      </>
    ),
  },
  {
    name: "chrome",
    art: (
      <>
        <circle cx="14" cy="14" r="12" fill="#f8c62c" />
        <path d="M3.600 8A12 12 0 0 1 24.400 8H14a6 6 0 0 0-5 9z" fill="#db3d32" />
        <path d="M3.600 8A12 12 0 0 0 14 26l5-9a6 6 0 0 1-10 0z" fill="#2c9c4f" />
        <circle cx="14" cy="14" r="6" fill="#fff" />
        <circle cx="14" cy="14" r="4.500" fill="#3b7be4" />
      </>
    ),
  },
  {
    name: "outlook",
    art: (
      <>
        <path d="M6 11L18 3q2-1 3 1l4 6v12q0 3-3 3H8z" fill="#2f47b8" />
        <path d="M8 13L19 5l5 6-11 8z" fill="#5b9cf0" />
        <path d="M10 20l15-9v12q0 3-3 3H10z" fill="#2ba4ee" />
        <rect x="2" y="13" width="11" height="11" rx="2" fill="#1659ae" />
        <circle cx="7.500" cy="18.500" r="2.700" fill="none" stroke="#fff" strokeWidth="1.500" />
      </>
    ),
  },
  {
    name: "powerbi",
    art: (
      <>
        <path d="M2 2h24v24H2z" fill="#1578b4" />
        <path d="M15 2h8v24h-8z" fill="#c99317" />
        <path d="M10 8h8v18h-8z" fill="#f0c437" />
        <path d="M6 14h7v12H6z" fill="#fbe07c" />
      </>
    ),
  },
  {
    name: "snip",
    art: (
      <>
        <rect x="3" y="2" width="18" height="19" rx="2" fill="#f5f5f7" />
        <path d="M14 5.500H6.500V16" fill="none" stroke="#d43f34" strokeWidth="3" strokeDasharray="3 1.200" />
        <path d="M8 15h13M16.500 5v16" fill="none" stroke="#9699a0" strokeWidth="2.200" />
        <circle cx="22.500" cy="15" r="2.800" fill="#fff" stroke="#2a9bd7" strokeWidth="1.700" />
        <circle cx="16" cy="24" r="2.800" fill="#fff" stroke="#2a9bd7" strokeWidth="1.700" />
      </>
    ),
  },
];

function Taskbar() {
  return (
    <footer className="flex h-12 items-center bg-linear-to-r from-[#e0edf4] via-[#d4dff3] to-[#e1eff4] text-[11.200px] text-[#30302e]">
      <div className="flex w-[274px] items-center pl-[17px]">
        <svg width="31" height="32" viewBox="0 0 31 32" className="mb-[3px]">
          <path d="M2 22C3 4 25 4 26 22z" fill="#f8bb14" />
          <path d="M10 25l4 3 4-3" fill="none" stroke="#2a9bd0" strokeWidth="3" />
          <circle cx="21" cy="8.500" r="8" fill="#b91f25" />
          <text x="21" y="12.300" textAnchor="middle" fontSize="10" fontWeight="600" fill="#fff">6</text>
        </svg>
        <div className="ml-[3px] leading-4">
          <p>Sunset</p>
          <p className="text-[#666664]">5:51 pm</p>
        </div>
      </div>
      <div className="flex w-[43px] justify-center">
        <svg width="24" height="24" viewBox="0 0 24 24">
          <defs>
            <linearGradient id="win" x1="0" y1="0" x2="1" y2="1">
              <stop offset="0" stopColor="#55cdf5" />
              <stop offset="1" stopColor="#0673c8" />
            </linearGradient>
          </defs>
          <path d="M.5.5H11.500v11H.5zM12.500.5h11v11h-11zM.5 12.500h11v11H.5zM12.500 12.500h11v11h-11z" fill="url(#win)" />
        </svg>
      </div>
      <div className="ml-[5px] flex h-[31px] w-[217px] items-center rounded-full border border-[#d1d8e1] bg-[#f3f7fb] pl-[10px] text-[13px] text-[#666664] shadow-sm">
        <Magnifier size={15} color="#222" flip width={2} />
        <span className="ml-[10px] mt-px">Search</span>
        <span className="ml-auto mr-1">
          <Zebra />
        </span>
      </div>
      <div className="ml-[3.5px] flex h-12">
        {apps.map((app) => (
          <div key={app.name} className="relative flex w-11 items-center justify-center">
            {app.name === "powerbi" ? <i className="absolute left-[4px] top-[5px] h-[37px] w-[37px] rounded bg-[#f5f8fc]" /> : null}
            <svg width="28" height="28" viewBox="0 0 28 28" className="relative">
              {app.art}
            </svg>
            {app.name === "powerbi" ? <i className="absolute bottom-[5px] h-[3px] w-4 rounded-full bg-[#2276b8]" /> : null}
            {app.name === "chrome" || app.name === "snip" ? (
              <i className="absolute bottom-[5px] h-[3px] w-[6px] rounded-full bg-[#858891]" />
            ) : null}
          </div>
        ))}
      </div>
      <div className="ml-[57.5px] flex items-center">
        <span className="flex w-8 justify-center">
          <ChevronUp size={16} />
        </span>
        <span className="flex w-8 justify-center">
          <svg width="18" height="16" viewBox="0 0 18 16" fill="none" stroke="#333" strokeWidth="1.300">
            <path d="M4.500 13.500C1 13 .8 8.500 4.500 8 5 4 11 2.500 13 6.500c4 .5 5 6 1 7z" fill="#b9bec4" />
            <path d="M2 1l14 14" />
          </svg>
        </span>
        <span className="flex w-8 justify-center">
          <Mic size={17} color="#3a66a8" strokeWidth={1.8} />
        </span>
        <span className="mt-[2px] w-[45px] text-center leading-[15px]">
          ENG
          <br />
          IN
        </span>
        <span className="ml-[3px] flex w-6 justify-center">
          <Wifi size={17} />
        </span>
        <span className="flex w-6 justify-center">
          <Volume2 size={17} strokeWidth={1.7} />
        </span>
        <span className="flex w-6 justify-center">
          <svg width="18" height="14" viewBox="0 0 18 14" fill="none" stroke="#222" strokeWidth="1.300">
            <rect x="3" y="4" width="12" height="8.500" rx="2" />
            <path d="M5 6h8v4.500H5z" fill="#222" />
            <path d="M16.500 6.500v3" strokeWidth="2" />
            <path d="M4 0L1 4h2.500L2.500 8 6 3.500H4z" fill="#222" strokeWidth=".6" />
          </svg>
        </span>
      </div>
      <div className="w-[69px] text-right leading-4">
        <p>5:36 PM</p>
        <p>1/31/2026</p>
      </div>
      <svg width="14" height="17" viewBox="0 0 14 17" fill="#0b4399" className="ml-2">
        <path d="M7 .5C3.500.5 2 3 2 6v4L.5 13h13L12 10V6c0-3-1.500-5.500-5-5.500zM5 14h4c0 3-4 3-4 0z" />
      </svg>
    </footer>
  );
}

export default function App() {
  return (
    <div className="flex h-[720px] w-[1280px] flex-col overflow-hidden bg-white font-['Open_Sans','Noto_Sans',sans-serif]">
      <TitleBar />
      <Ribbon />
      <main className="relative flex h-[488px]">
        <ViewRail />
        <div className="flex w-[878px] flex-col">
          <div className="flex h-[452px]">
            <div className="relative min-w-0 flex-1 bg-[#fffffd]">
              <Slicer />
              <RankChart />
              <i className="absolute left-px top-[381px] w-[675px] border-t-2 border-dotted border-[#51514f]" />
            </div>
            <FiltersPane />
          </div>
          <PageTabs />
        </div>
        <VisualizationsPane />
        <DataPane />
        <svg width="25" height="12" viewBox="0 0 25 12" fill="#fff" stroke="#444" strokeWidth="1" className="absolute left-[912px] top-[328px]">
          <path d="M1 6l6-5v3.500h11V1l6 5-6 5V7.500H7V11z" />
        </svg>
      </main>
      <StatusBar />
      <Taskbar />
    </div>
  );
}
